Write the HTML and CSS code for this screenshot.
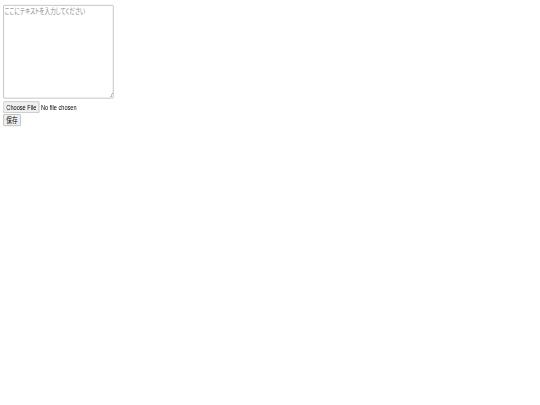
FILE: index.html
```html
<!DOCTYPE html>
<html lang="ja">
<head>
<meta charset="utf-8">
<title>保存</title>
<link rel="stylesheet" href="styles.css">
</head>
<body>
<div class="stage">
  <form class="form">
    <textarea class="text-input" placeholder="ここにテキストを入力してください"></textarea>
    <input class="file-input" type="file">
    <button class="save-btn" type="button">保存</button>
  </form>
</div>
</body>
</html>
```
FILE: styles.css
```css
html, body {
  margin: 0;
  padding: 0;
  background: #ffffff;
}
/* The reference is a 1280x720 page squeezed into 540x405 */
.stage {
  width: 400px;
  box-sizing: border-box;
  padding: 9px 8px 8px 8px;
  transform: scale(0.421875, 0.5625);
  transform-origin: 0 0;
  font-family: "Liberation Sans", "Noto Sans CJK JP", sans-serif;
  font-size: 13.33px;
}
.form {
  display: flex;
  flex-direction: column;
  align-items: flex-start;
}
.text-input {
  display: block;
  box-sizing: border-box;
  width: 261px;
  height: 166px;
  margin: 0;
  padding: 2px;
  border: 1px solid #8a8a8a;
  border-radius: 2px;
  font-family: "Liberation Sans", "Noto Sans CJK JP", sans-serif;
  font-size: 13.33px;
  font-feature-settings: "palt";
  line-height: 1.15;
  color: #222;
  resize: both;
}
.text-input::placeholder {
  color: #8c8c8c;
}
.file-input {
  margin: 5px 0 0 0;
  font-family: "Liberation Sans", "Noto Sans CJK JP", sans-serif;
  font-size: 13.33px;
  line-height: 15px;
  color: #000;
}
.file-input::file-selector-button {
  font: inherit;
  line-height: 15px;
  margin: 0 4px 0 0;
  padding: 2px 6px;
  border: 1px solid #8a8a8a;
  border-radius: 2px;
  background: #efefef;
  color: #000;
}
.save-btn {
  margin: 2px 0 0 0;
  padding: 2px 6px;
  font-family: "Liberation Sans", "Noto Sans CJK JP", sans-serif;
  font-size: 13.33px;
  line-height: 15px;
  border: 1px solid #8a8a8a;
  border-radius: 2px;
  background: #efefef;
  color: #000;
}
```
